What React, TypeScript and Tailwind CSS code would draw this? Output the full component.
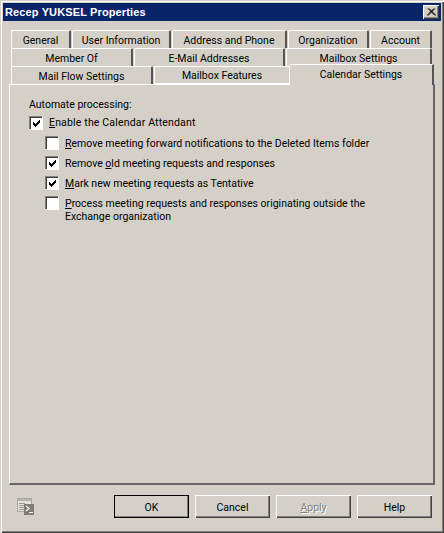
import { ReactNode } from "react";

const raised = "shadow-[inset_1px_1px_0_#fff,inset_-1px_-1px_0_#404040,inset_-2px_-2px_0_#808080]";

function Tab({ width, children }: { width: string; children: ReactNode }) {
  return (
    <div className={`${width} h-[18px] shrink-0 rounded-t-[2px] border-t border-l border-white border-r-2 border-r-[#555] flex items-center justify-center pt-[2px]`}>
      {children}
    </div>
  );
}

function CheckMark() {
  const cols = [2, 3, 4, 3, 2, 1, 0];
  return (
    <svg width="7" height="7" viewBox="0 0 7 7" shapeRendering="crispEdges">
      {cols.map((y, x) => (
        <rect key={x} x={x} y={y} width="1" height="3" fill="#000" />
      ))}
    </svg>
  );
}

function Check({ checked, label, indent }: { checked?: boolean; label: ReactNode; indent?: boolean }) {
  return (
    <div className={`flex items-start ${indent ? "ml-[35px]" : "ml-[19px]"} h-[20px]`}>
      <div className="w-[13px] h-[13px] shrink-0 bg-white border-t border-l border-[#808080] shadow-[inset_1px_1px_0_#404040,1px_1px_0_#fff] flex items-center justify-center">
        {checked && <CheckMark />}
      </div>
      <div className={`ml-[7px] leading-[13px] whitespace-nowrap ${indent ? "pt-[1px]" : "tracking-[0.17px]"}`}>{label}</div>
    </div>
  );
}

function Button({ children, primary }: { children: ReactNode; primary?: boolean }) {
  return (
    <div
      className={`w-[75px] h-[23px] flex items-center justify-center pt-[2px] ${raised} ${primary ? "outline outline-1 -outline-offset-1 outline-black" : ""}`}
    >
      {children}
    </div>
  );
}

function ShellIcon() {
  return (
    <svg width="17" height="17" viewBox="0 0 17 17">
      <rect x="0.5" y="0.5" width="14" height="13" fill="#e4e2dc" stroke="#aaa8a2" />
      <rect x="1" y="1" width="13" height="2" fill="#b4b2ac" />
      <path d="M2 5.5h6M2 7.5h5M2 9.5h5M2 11.5h5" stroke="#9c9a94" />
      <rect x="7" y="6" width="10" height="11" fill="#7f7d78" />
      <path d="M9 8l3 2.5-3 2.5" stroke="#f4f3ef" strokeWidth="1.3" fill="none" />
      <path d="M12 14.5h4" stroke="#f4f3ef" />
    </svg>
  );
}

export default function App() {
  return (
    <div className="w-[444px] h-[533px] bg-[#d4d0c8] text-black text-[10.5px] font-['Roboto','Liberation_Sans',Arial,sans-serif] pt-[3px] px-[3px] shadow-[inset_1px_1px_0_#d4d0c8,inset_2px_2px_0_#fff,inset_-1px_-1px_0_#404040,inset_-2px_-2px_0_#808080]">
      <div className="h-[18px] bg-[#0a246a] flex items-center justify-between pl-[2px] pr-[2px]">
        <span className="text-white font-bold text-[11px] font-['Liberation_Sans',Arial,sans-serif] tracking-[0.13px]">Recep YUKSEL Properties</span>
        <div className={`w-[16px] h-[14px] bg-[#d4d0c8] flex items-center justify-center ${raised}`}>
          <svg width="9" height="8" viewBox="0 0 9 8">
            <path d="M1 0.5 L8 7.5 M8 0.5 L1 7.5 M2 0.5 L9 7.5 M7 0.5 L0 7.5" stroke="#000" />
          </svg>
        </div>
      </div>

      <div className="ml-[6px] w-[426px] mt-[9px]">
        <div className="pl-[2px] flex gap-[1px]">
          <Tab width="w-[60px]">General</Tab>
          <Tab width="w-[99px]">User Information</Tab>
          <Tab width="w-[115px]">Address and Phone</Tab>
          <Tab width="w-[81px]">Organization</Tab>
          <Tab width="w-[62px]">Account</Tab>
        </div>
        <div className="pl-[2px] flex gap-[1px]">
          <Tab width="w-[122px]">Member Of</Tab>
          <Tab width="w-[151px]">E-Mail Addresses</Tab>
          <Tab width="w-[146px]">Mailbox Settings</Tab>
        </div>
        <div className="pl-[2px] flex items-end h-[18px] relative z-10">
          <Tab width="w-[142px] mr-[1px]">Mail Flow Settings</Tab>
          <div className="w-[136px] h-[18px] border-t border-l border-white border-r border-r-white border-b border-b-white flex items-center justify-center pt-[1px]">
            Mailbox Features
          </div>
          <div className="w-[144px] h-[21px] -mb-[1px] bg-[#d4d0c8] border-t border-t-white border-r-2 border-r-[#555] flex justify-center pt-[3px] leading-[14px]">
            Calendar Settings
          </div>
        </div>

        <div className="h-[401px] w-[426px] border-t border-l border-white border-r-2 border-r-[#666] border-b-2 border-b-[#666] pt-[13px]">
          <div className="ml-[19px] h-[18px] leading-[14px]">Automate processing:</div>
          <Check checked label={<><u>E</u>nable the Calendar Attendant</>} />
          <Check indent label={<><u>R</u>emove meeting forward notifications to the Deleted Items folder</>} />
          <Check indent checked label={<>Remove <u>o</u>ld meeting requests and responses</>} />
          <Check indent checked label={<><u>M</u>ark new meeting requests as Tentative</>} />
          <Check
            indent
            label={<><u>P</u>rocess meeting requests and responses originating outside the<br />Exchange organization</>}
          />
        </div>
      </div>

      <div className="ml-[14px] w-[415px] mt-[10px] flex items-center justify-between">
        <ShellIcon />
        <div className="flex gap-[6px]">
          <Button primary>OK</Button>
          <Button>Cancel</Button>
          <Button><span className="text-[#808080] [text-shadow:1px_1px_0_#fff]"><u>A</u>pply</span></Button>
          <Button>Help</Button>
        </div>
      </div>
    </div>
  );
}
